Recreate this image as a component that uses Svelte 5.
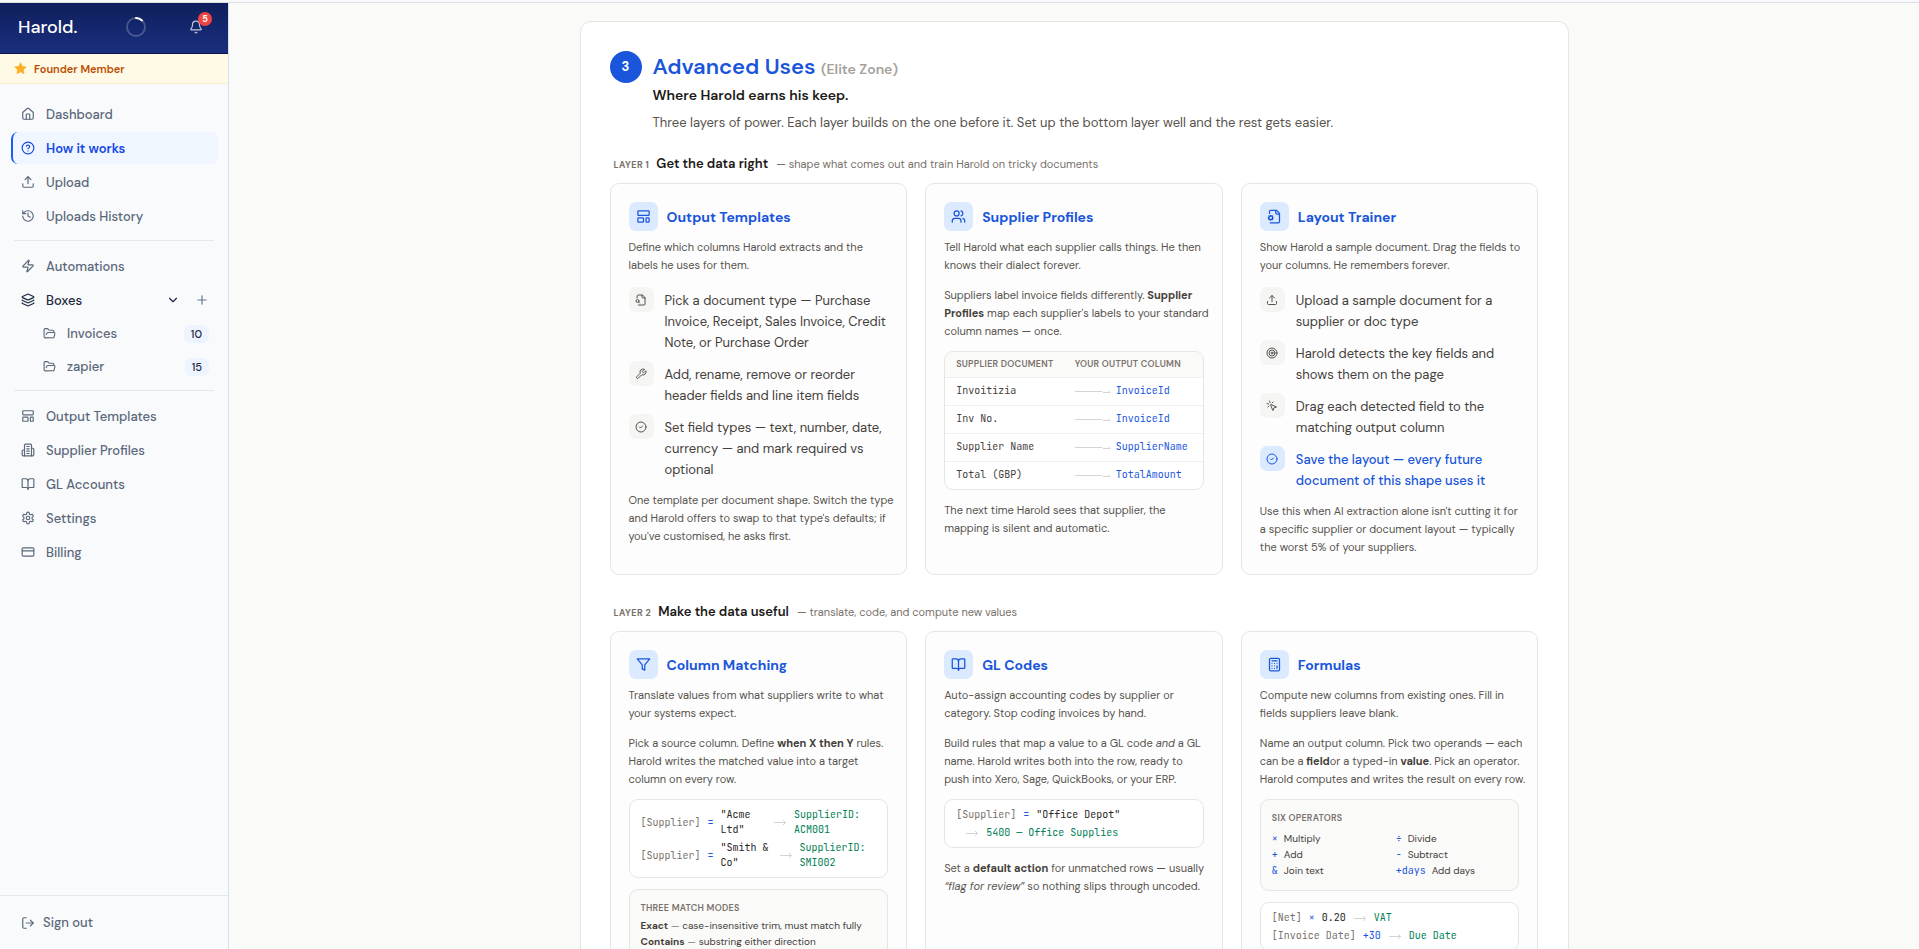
<script lang="ts">
	const icons: Record<string, string> = {
		house: '<path d="M15 21v-8a1 1 0 0 0-1-1h-4a1 1 0 0 0-1 1v8"/><path d="M3 10a2 2 0 0 1 .709-1.528l7-5.999a2 2 0 0 1 2.582 0l7 5.999A2 2 0 0 1 21 10v9a2 2 0 0 1-2 2H5a2 2 0 0 1-2-2z"/>',
		help: '<circle cx="12" cy="12" r="10"/><path d="M9.09 9a3 3 0 0 1 5.83 1c0 2-3 3-3 3"/><path d="M12 17h.01"/>',
		upload: '<path d="M21 15v4a2 2 0 0 1-2 2H5a2 2 0 0 1-2-2v-4"/><path d="m17 8-5-5-5 5"/><path d="M12 3v12"/>',
		history: '<path d="M3 12a9 9 0 1 0 9-9 9.75 9.75 0 0 0-6.74 2.74L3 8"/><path d="M3 3v5h5"/><path d="M12 7v5l4 2"/>',
		zap: '<path d="M4 14a1 1 0 0 1-.78-1.63l9.9-10.2a.5.5 0 0 1 .86.46l-1.92 6.02A1 1 0 0 0 13 10h7a1 1 0 0 1 .78 1.63l-9.9 10.2a.5.5 0 0 1-.86-.46l1.92-6.02A1 1 0 0 0 11 14z"/>',
		layers: '<path d="M12.83 2.18a2 2 0 0 0-1.66 0L2.6 6.08a1 1 0 0 0 0 1.83l8.58 3.91a2 2 0 0 0 1.66 0l8.58-3.9a1 1 0 0 0 0-1.83z"/><path d="M2 12a1 1 0 0 0 .58.91l8.6 3.91a2 2 0 0 0 1.65 0l8.58-3.9A1 1 0 0 0 22 12"/><path d="M2 17a1 1 0 0 0 .58.91l8.6 3.91a2 2 0 0 0 1.65 0l8.58-3.9A1 1 0 0 0 22 17"/>',
		folder: '<path d="m6 14 1.5-2.9A2 2 0 0 1 9.24 10H20a2 2 0 0 1 1.94 2.5l-1.54 6a2 2 0 0 1-1.95 1.5H4a2 2 0 0 1-2-2V5a2 2 0 0 1 2-2h3.9a2 2 0 0 1 1.69.9l.81 1.2a2 2 0 0 0 1.67.9H18a2 2 0 0 1 2 2v2"/>',
		template: '<rect width="18" height="7" x="3" y="3" rx="1"/><rect width="9" height="7" x="3" y="14" rx="1"/><rect width="5" height="7" x="16" y="14" rx="1"/>',
		building: '<path d="M6 22V4a2 2 0 0 1 2-2h8a2 2 0 0 1 2 2v18Z"/><path d="M6 12H4a2 2 0 0 0-2 2v6a2 2 0 0 0 2 2h2"/><path d="M18 9h2a2 2 0 0 1 2 2v9a2 2 0 0 1-2 2h-2"/><path d="M10 6h4"/><path d="M10 10h4"/><path d="M10 14h4"/><path d="M10 18h4"/>',
		book: '<path d="M12 7v14"/><path d="M3 18a1 1 0 0 1-1-1V4a1 1 0 0 1 1-1h5a4 4 0 0 1 4 4 4 4 0 0 1 4-4h5a1 1 0 0 1 1 1v13a1 1 0 0 1-1 1h-6a3 3 0 0 0-3 3 3 3 0 0 0-3-3z"/>',
		settings: '<path d="M12.22 2h-.44a2 2 0 0 0-2 2v.18a2 2 0 0 1-1 1.73l-.43.25a2 2 0 0 1-2 0l-.15-.08a2 2 0 0 0-2.73.73l-.22.38a2 2 0 0 0 .73 2.73l.15.1a2 2 0 0 1 1 1.72v.51a2 2 0 0 1-1 1.74l-.15.09a2 2 0 0 0-.73 2.73l.22.38a2 2 0 0 0 2.73.73l.15-.08a2 2 0 0 1 2 0l.43.25a2 2 0 0 1 1 1.73V20a2 2 0 0 0 2 2h.44a2 2 0 0 0 2-2v-.18a2 2 0 0 1 1-1.73l.43-.25a2 2 0 0 1 2 0l.15.08a2 2 0 0 0 2.73-.73l.22-.39a2 2 0 0 0-.73-2.73l-.15-.08a2 2 0 0 1-1-1.74v-.5a2 2 0 0 1 1-1.74l.15-.09a2 2 0 0 0 .73-2.73l-.22-.38a2 2 0 0 0-2.73-.73l-.15.08a2 2 0 0 1-2 0l-.43-.25a2 2 0 0 1-1-1.73V4a2 2 0 0 0-2-2z"/><circle cx="12" cy="12" r="3"/>',
		card: '<rect width="20" height="14" x="2" y="5" rx="2"/><path d="M2 10h20"/>',
		logout: '<path d="M9 21H5a2 2 0 0 1-2-2V5a2 2 0 0 1 2-2h4"/><path d="m16 17 5-5-5-5"/><path d="M21 12H9"/>',
		bell: '<path d="M10.268 21a2 2 0 0 0 3.464 0"/><path d="M3.262 15.326A1 1 0 0 0 4 17h16a1 1 0 0 0 .74-1.673C19.41 13.956 18 12.499 18 8A6 6 0 0 0 6 8c0 4.499-1.411 5.956-2.738 7.326"/>',
		chevron: '<path d="m6 9 6 6 6-6"/>',
		plus: '<path d="M5 12h14"/><path d="M12 5v14"/>',
		users: '<path d="M16 21v-2a4 4 0 0 0-4-4H6a4 4 0 0 0-4 4v2"/><circle cx="9" cy="7" r="4"/><path d="M22 21v-2a4 4 0 0 0-3-3.87"/><path d="M16 3.13a4 4 0 0 1 0 7.75"/>',
		fileCog: '<path d="M14 2v4a2 2 0 0 0 2 2h4"/><path d="M4 7V4a2 2 0 0 1 2-2h9l5 5v13a2 2 0 0 1-2 2H5"/><circle cx="6" cy="14" r="3"/><path d="M6 10v1M6 17v1M10 14H9M3 14H2m6.8-2.8-.7.7m-4.2 4.2-.7.7m0-5.6.7.7m4.2 4.2.7.7"/>',
		fileSearch: '<path d="M14 2v4a2 2 0 0 0 2 2h4"/><path d="M4.27 8V4a2 2 0 0 1 2-2H15l5 5v13a2 2 0 0 1-2 2H7"/><circle cx="5" cy="14" r="3"/><path d="m9 18-1.9-1.9"/>',
		wrench: '<path d="M14.7 6.3a1 1 0 0 0 0 1.4l1.6 1.6a1 1 0 0 0 1.4 0l3.77-3.77a6 6 0 0 1-7.94 7.94l-6.91 6.91a2.12 2.12 0 0 1-3-3l6.91-6.91a6 6 0 0 1 7.94-7.94z"/>',
		check: '<circle cx="12" cy="12" r="10"/><path d="m9 12 2 2 4-4"/>',
		target: '<circle cx="12" cy="12" r="10"/><circle cx="12" cy="12" r="6"/><circle cx="12" cy="12" r="2"/>',
		click: '<path d="M14 4.1 12 6"/><path d="m5.1 8-2.9-.8"/><path d="m6 12-1.9 2"/><path d="M7.2 2.2 8 5.1"/><path d="M9.037 9.69a.498.498 0 0 1 .653-.653l11 4.5a.5.5 0 0 1-.074.949l-4.349 1.041a1 1 0 0 0-.74.739l-1.04 4.35a.5.5 0 0 1-.95.074z"/>',
		filter: '<path d="M22 3H2l8 9.46V19l4 2v-8.54z"/>',
		calculator: '<rect width="16" height="20" x="4" y="2" rx="2"/><path d="M8 6h8"/><path d="M16 14v4"/><path d="M16 10h.01M12 10h.01M8 10h.01M12 14h.01M8 14h.01M12 18h.01M8 18h.01"/>'
	};

	const mainNav = [
		{ icon: 'house', label: 'Dashboard' },
		{ icon: 'help', label: 'How it works', active: true },
		{ icon: 'upload', label: 'Upload' },
		{ icon: 'history', label: 'Uploads History' }
	];

	const boxes = [
		{ label: 'Invoices', count: 10 },
		{ label: 'zapier', count: 15 }
	];

	const setupNav = [
		{ icon: 'template', label: 'Output Templates' },
		{ icon: 'building', label: 'Supplier Profiles' },
		{ icon: 'book', label: 'GL Accounts' },
		{ icon: 'settings', label: 'Settings' },
		{ icon: 'card', label: 'Billing' }
	];

	const mappings = [
		['Invoitizia', 'InvoiceId'],
		['Inv No.', 'InvoiceId'],
		['Supplier Name', 'SupplierName'],
		['Total (GBP)', 'TotalAmount']
	];

	const matchRules = [
		['"Acme Ltd"', 'SupplierID: ACM001'],
		['"Smith & Co"', 'SupplierID: SMI002']
	];

	const operators = [
		['×', 'Multiply'],
		['÷', 'Divide'],
		['+', 'Add'],
		['-', 'Subtract'],
		['&', 'Join text'],
		['+days', 'Add days']
	];

	let boxesOpen = $state(true);
</script>

{#snippet icon(name: string, size = 14)}
	<svg class="icon" width={size} height={size} viewBox="0 0 24 24" aria-hidden="true">
		{@html icons[name]}
	</svg>
{/snippet}

{#snippet arrow()}
	<svg class="arrow" width="14" height="8" viewBox="0 0 14 8" aria-hidden="true">
		<path d="M1 4.500h12M10 2l2.500 2.500L10 7" />
	</svg>
{/snippet}

{#snippet longArrow()}
	<svg class="arrow" width="36" height="8" viewBox="0 0 36 8" aria-hidden="true">
		<path d="M0 4.500h27M28 5.500h7l-2-2" />
	</svg>
{/snippet}

{#snippet heading(name: string, title: string)}
	<div class="card-head">
		<span class="card-icon">{@render icon(name, 15)}</span>
		<h3>{title}</h3>
	</div>
{/snippet}

<div class="app">
	<div class="topline"></div>
	<div class="shell">
		<aside class="sidebar">
			<header class="brand">
				<span class="logo">Harold.</span>
				<svg class="spinner" width="22" height="22" viewBox="0 0 22 22" aria-hidden="true">
					<circle cx="11" cy="11" r="9" />
					<path d="M11 2a9 9 0 0 1 6 2.400" />
				</svg>
				<button class="bell" aria-label="Notifications">
					{@render icon('bell')}
					<span class="bell-count">5</span>
				</button>
			</header>

			<div class="founder">
				<svg width="13" height="13" viewBox="0 0 24 24" aria-hidden="true">
					<path d="M12 1.500l3.200 6.700 7.300 1-5.300 5.100 1.300 7.300L12 18.100l-6.500 3.500 1.300-7.300L1.500 9.200l7.300-1z" />
				</svg>
				Founder Member
			</div>

			<nav class="nav">
				{#each mainNav as item}
					<a href="#top" class="nav-item" class:active={item.active}>
						{@render icon(item.icon)}
						{item.label}
					</a>
				{/each}
				<hr />
				<a href="#top" class="nav-item">{@render icon('zap')} Automations</a>
				<div class="nav-item boxes">
					{@render icon('layers')}
					<a href="#top">Boxes</a>
					<button aria-label="Toggle boxes" onclick={() => (boxesOpen = !boxesOpen)}>
						{@render icon('chevron')}
					</button>
					<button class="add" aria-label="Add box">{@render icon('plus')}</button>
				</div>
				{#if boxesOpen}
					{#each boxes as box}
						<a href="#top" class="nav-item sub">
							{@render icon('folder', 13)}
							{box.label}
							<span class="count">{box.count}</span>
						</a>
					{/each}
				{/if}
				<hr />
				{#each setupNav as item}
					<a href="#top" class="nav-item">
						{@render icon(item.icon)}
						{item.label}
					</a>
				{/each}
			</nav>

			<div class="signout">
				<button>{@render icon('logout')} Sign out</button>
			</div>
		</aside>

		<main class="content">
			<section class="panel">
				<div class="intro">
					<span class="step">3</span>
					<div>
						<h1>Advanced Uses <span>(Elite Zone)</span></h1>
						<p class="tagline">Where Harold earns his keep.</p>
						<p class="lead">
							Three layers of power. Each layer builds on the one before it. Set up the bottom layer well and the rest gets easier.
						</p>
					</div>
				</div>

				<div class="layer">
					<span class="layer-no">LAYER 1</span>
					<h2>Get the data right</h2>
					<span class="layer-sub">— shape what comes out and train Harold on tricky documents</span>
				</div>

				<div class="cards">
					<article class="card">
						{@render heading('template', 'Output Templates')}
						<p>Define which columns Harold extracts and the labels he uses for them.</p>
						<ul class="steps">
							<li>
								<span class="tile">{@render icon('fileSearch', 12)}</span>
								<span>Pick a document type — Purchase Invoice, Receipt, Sales Invoice, Credit Note, or Purchase Order</span>
							</li>
							<li>
								<span class="tile">{@render icon('wrench', 12)}</span>
								<span>Add, rename, remove or reorder header fields and line item fields</span>
							</li>
							<li>
								<span class="tile">{@render icon('check', 12)}</span>
								<span>Set field types — text, number, date, currency — and mark required vs optional</span>
							</li>
						</ul>
						<p>
							One template per document shape. Switch the type and Harold offers to swap to that type's defaults;
							if you've customised, he asks first.
						</p>
					</article>

					<article class="card">
						{@render heading('users', 'Supplier Profiles')}
						<p>Tell Harold what each supplier calls things. He then knows their dialect forever.</p>
						<p class="detail">
							Suppliers label invoice fields differently. <strong>Supplier Profiles</strong> map each supplier's
							labels to your standard column names — once.
						</p>
						<div class="mapping">
							<table>
								<thead>
									<tr>
										<th>Supplier document</th>
										<th>Your output column</th>
									</tr>
								</thead>
								<tbody>
									{#each mappings as [from, to]}
										<tr>
											<td>{from}</td>
											<td><span class="target">{@render longArrow()}{to}</span></td>
										</tr>
									{/each}
								</tbody>
							</table>
						</div>
						<p>The next time Harold sees that supplier, the mapping is silent and automatic.</p>
					</article>

					<article class="card">
						{@render heading('fileCog', 'Layout Trainer')}
						<p>Show Harold a sample document. Drag the fields to your columns. He remembers forever.</p>
						<ul class="steps">
							<li>
								<span class="tile">{@render icon('upload', 12)}</span>
								<span>Upload a sample document for a supplier or doc type</span>
							</li>
							<li>
								<span class="tile">{@render icon('target', 12)}</span>
								<span>Harold detects the key fields and shows them on the page</span>
							</li>
							<li>
								<span class="tile">{@render icon('click', 12)}</span>
								<span>Drag each detected field to the matching output column</span>
							</li>
							<li class="final">
								<span class="tile">{@render icon('check', 12)}</span>
								<span>Save the layout — every future document of this shape uses it</span>
							</li>
						</ul>
						<p>
							Use this when AI extraction alone isn't cutting it for a specific supplier or document layout —
							typically the worst 5% of your suppliers.
						</p>
					</article>
				</div>

				<div class="layer">
					<span class="layer-no">LAYER 2</span>
					<h2>Make the data useful</h2>
					<span class="layer-sub">— translate, code, and compute new values</span>
				</div>

				<div class="cards">
					<article class="card">
						{@render heading('filter', 'Column Matching')}
						<p>Translate values from what suppliers write to what your systems expect.</p>
						<p class="detail">
							Pick a source column. Define <strong>when X then Y</strong> rules. Harold writes the matched value
							into a target column on every row.
						</p>
						<div class="code">
							{#each matchRules as [value, result]}
								<div class="line">
									<span class="field">[Supplier]</span>
									<span class="op">=</span>
									<span class="value">{value}</span>
									{@render arrow()}
									<span class="result">{result}</span>
								</div>
							{/each}
						</div>
						<div class="box">
							<h4>Three match modes</h4>
							<p><strong>Exact</strong> <i>—</i> case-insensitive trim, must match fully</p>
							<p><strong>Contains</strong> <i>—</i> substring either direction</p>
						</div>
					</article>

					<article class="card">
						{@render heading('book', 'GL Codes')}
						<p>Auto-assign accounting codes by supplier or category. Stop coding invoices by hand.</p>
						<p class="detail">
							Build rules that map a value to a GL code <em>and</em> a GL name. Harold writes both into the row,
							ready to push into Xero, Sage, QuickBooks, or your ERP.
						</p>
						<div class="code">
							<div class="line">
								<span class="field">[Supplier]</span>
								<span class="op">=</span>
								<span class="value">"Office Depot"</span>
							</div>
							<div class="line indent">
								{@render arrow()}
								<span class="result">5400 — Office Supplies</span>
							</div>
						</div>
						<p>
							Set a <strong>default action</strong> for unmatched rows — usually
							<em>“flag for review”</em> so nothing slips through uncoded.
						</p>
					</article>

					<article class="card">
						{@render heading('calculator', 'Formulas')}
						<p>Compute new columns from existing ones. Fill in fields suppliers leave blank.</p>
						<p class="detail">
							Name an output column. Pick two operands — each can be a <strong>field</strong>or a typed-in
							<strong>value</strong>. Pick an operator. Harold computes and writes the result on every row.
						</p>
						<div class="box">
							<h4>Six operators</h4>
							<div class="operators">
								{#each operators as [sign, name]}
									<span><b>{sign}</b>{name}</span>
								{/each}
							</div>
						</div>
						<div class="code">
							<div class="line">
								<span class="field">[Net]</span>
								<span class="op">×</span>
								<span class="value">0.20</span>
								{@render arrow()}
								<span class="result">VAT</span>
							</div>
							<div class="line">
								<span class="field">[Invoice Date]</span>
								<span class="op">+30</span>
								{@render arrow()}
								<span class="result">Due Date</span>
							</div>
						</div>
					</article>
				</div>
			</section>
		</main>
	</div>
</div>

<style>
	:global(body) {
		background: #fafaf8;
	}

	.app {
		display: flex;
		flex-direction: column;
		height: 100vh;
		overflow: hidden;
		font-family: 'DM Sans', Inter, sans-serif;
		color: #44403c;
	}

	.app :global(*) {
		box-sizing: border-box;
	}

	h1, h2, h3, h4, p, ul {
		margin: 0;
		padding: 0;
	}

	button {
		padding: 0;
		border: none;
		background: none;
		color: inherit;
		font: inherit;
		cursor: pointer;
	}

	a {
		color: inherit;
		text-decoration: none;
	}

	.icon {
		display: block;
		flex: none;
		fill: none;
		stroke: currentColor;
		stroke-width: 2;
		stroke-linecap: round;
		stroke-linejoin: round;
	}

	.topline {
		flex: none;
		height: 3px;
		background: #f8f9fb;
		border-bottom: 1px solid #dddde0;
	}

	.shell {
		flex: 1;
		display: flex;
		min-height: 0;
	}

	/* Sidebar */

	.sidebar {
		flex: none;
		display: flex;
		flex-direction: column;
		width: 229px;
		background: #f8fafc;
		border-right: 1px solid #d5e0f0;
	}

	.brand {
		display: flex;
		align-items: center;
		justify-content: space-between;
		height: 51px;
		padding: 0 24px 2px 18px;
		background: linear-gradient(180deg, #0f1f5c, #1a2e7e);
		border-bottom: 1px solid #0b1748;
		color: #fff;
	}

	.logo {
		font-size: 18px;
		font-weight: 500;
	}

	.spinner {
		margin-left: 6px;
		fill: none;
		stroke-width: 2;
	}

	.spinner circle {
		stroke: rgba(255, 255, 255, 0.22);
	}

	.spinner path {
		stroke: #fff;
		stroke-linecap: round;
	}

	.bell {
		position: relative;
		padding-right: 1px;
		color: rgba(255, 255, 255, 0.75);
	}

	.bell-count {
		position: absolute;
		top: -8px;
		right: -8px;
		width: 14px;
		height: 14px;
		border-radius: 50%;
		background: #ef4444;
		color: #fff;
		font-size: 9px;
		font-weight: 700;
		line-height: 14px;
		text-align: center;
	}

	.founder {
		display: flex;
		align-items: center;
		gap: 7px;
		height: 30px;
		padding: 0 14px;
		background: #fffae6;
		border-bottom: 1px solid #fbeecb;
		color: #bb4d00;
		font-size: 11px;
		font-weight: 600;
	}

	.founder svg {
		fill: #fdb022;
		stroke: #f59e0b;
		stroke-width: 1;
	}

	.nav {
		flex: 1;
		display: flex;
		flex-direction: column;
		gap: 2px;
		padding: 14px 10px 14px 11px;
	}

	.nav hr {
		width: 200px;
		margin: 6px 3px 7px;
		border: none;
		border-top: 1px solid #e5e7eb;
	}

	.nav-item {
		display: flex;
		align-items: center;
		gap: 11px;
		height: 32px;
		padding: 0 9px 0 8px;
		border-left: 2px solid transparent;
		border-radius: 7px;
		color: #5b6779;
		font-size: 13px;
		font-weight: 500;
	}

	.nav-item.active {
		background: #eff6ff;
		border-left-color: #155dfc;
		color: #1447e6;
		font-weight: 600;
	}

	.nav-item.boxes {
		color: #1d293d;
	}

	.boxes a {
		flex: 1;
	}

	.boxes .add {
		margin-left: 4px;
		color: #62748e;
	}

	.nav-item.sub {
		height: 31px;
		padding-left: 30px;
	}

	.count {
		margin-left: auto;
		padding: 0 7px;
		border-radius: 7px;
		background: #edf3ff;
		color: #1d293d;
		font-size: 11px;
		line-height: 18px;
	}

	.signout {
		padding: 18px 21px;
		border-top: 1px solid #e2e8f0;
		color: #5b6779;
		font-size: 13px;
		font-weight: 500;
		line-height: 17px;
	}

	.signout button {
		display: flex;
		align-items: center;
		gap: 8px;
	}

	/* Content */

	.content {
		flex: 1;
		padding: 18px 24px;
		overflow-y: auto;
		scrollbar-width: none;
	}

	.panel {
		max-width: 989px;
		margin: 0 auto;
		padding: 29px;
		background: #fff;
		border: 1px solid #e7e5e4;
		border-radius: 11px;
	}

	.intro {
		display: flex;
		gap: 11px;
		margin-bottom: 17px;
	}

	.step {
		flex: none;
		width: 32px;
		height: 32px;
		border-radius: 50%;
		background: #1a56db;
		color: #fff;
		font-size: 13px;
		font-weight: 700;
		line-height: 32px;
		text-align: center;
	}

	h1 {
		color: #1a56db;
		font-size: 22px;
		font-weight: 600;
		line-height: 31px;
	}

	h1 span {
		color: #a6a09b;
		font-size: 14px;
		font-weight: 600;
	}

	.tagline {
		color: #1c1917;
		font-size: 14px;
		font-weight: 600;
		line-height: 20px;
	}

	.lead {
		margin-top: 5px;
		color: #57534d;
		font-size: 13px;
		line-height: 26px;
	}

	.layer {
		display: flex;
		align-items: baseline;
		padding: 0 4px;
		margin-bottom: 7px;
		line-height: 21px;
	}

	.layer-no {
		margin-right: 7px;
		color: #79716b;
		font-size: 9px;
		font-weight: 700;
		letter-spacing: 0.05em;
	}

	h2 {
		margin-right: 8px;
		color: #1c1917;
		font-size: 13px;
		font-weight: 600;
	}

	.layer-sub {
		color: #79716b;
		font-size: 11px;
	}

	.cards {
		display: grid;
		grid-template-columns: repeat(3, minmax(0, 1fr));
		gap: 18px;
		margin-bottom: 26px;
	}

	.card {
		padding: 18px;
		background: #fdfdfd;
		border: 1px solid #e7e5e4;
		border-radius: 9px;
		color: #57534d;
		font-size: 11px;
		line-height: 18px;
	}

	/* let the copy run slightly wider than the boxes below it */
	.card > p {
		margin-right: -6px;
	}

	.card-head {
		display: flex;
		align-items: center;
		gap: 9px;
		margin-bottom: 7px;
	}

	.card-icon {
		display: grid;
		place-items: center;
		width: 29px;
		height: 29px;
		border-radius: 7px;
		background: #dbeafe;
		color: #1a56db;
	}

	h3 {
		color: #1a56db;
		font-size: 14px;
		font-weight: 700;
	}

	.card strong {
		color: #44403b;
		font-weight: 700;
	}

	.card .detail {
		margin-top: 12px;
	}

	.steps {
		display: flex;
		flex-direction: column;
		gap: 8px;
		margin: 13px 0 11px;
		list-style: none;
	}

	.steps li {
		display: flex;
		gap: 11px;
		color: #44403b;
		font-size: 13px;
		line-height: 21px;
	}

	.steps li > span:last-child {
		padding-top: 3px;
	}

	.tile {
		flex: none;
		display: grid;
		place-items: center;
		width: 25px;
		height: 25px;
		border-radius: 7px;
		background: #f5f5f4;
		color: #57534d;
	}

	.steps .final {
		color: #1a56db;
		font-weight: 500;
	}

	.final .tile {
		background: #dbeafe;
		color: #1a56db;
	}

	.mapping {
		margin: 11px 0;
		border: 1px solid #e7e5e4;
		border-radius: 9px;
		background: #fff;
		overflow: hidden;
	}

	table {
		width: 100%;
		border-collapse: collapse;
	}

	th, td {
		padding: 0 0 0 11px;
		text-align: left;
	}

	th {
		height: 25px;
		background: #fafaf9;
		color: #79716b;
		font-size: 9px;
		font-weight: 600;
		letter-spacing: 0.025em;
		line-height: 12px;
		text-transform: uppercase;
	}

	th:first-child {
		width: 46%;
	}

	td {
		height: 28px;
		border-top: 1px solid #f0efee;
		color: #44403b;
		font-family: 'JetBrains Mono', 'DejaVu Sans Mono', monospace;
		font-size: 10px;
	}

	.target {
		display: flex;
		align-items: center;
		gap: 5px;
		color: #1a56db;
	}

	.arrow {
		flex: none;
		fill: none;
		stroke: #d6d3d1;
		stroke-width: 1;
	}

	.code {
		margin: 11px 0;
		padding: 7px 11px;
		border: 1px solid #e7e5e4;
		border-radius: 9px;
		background: #fff;
		font-family: 'JetBrains Mono', 'DejaVu Sans Mono', monospace;
		font-size: 10px;
	}

	.line {
		display: flex;
		align-items: center;
		gap: 7px;
		line-height: 15px;
	}

	.line + .line {
		margin-top: 3px;
	}

	.indent {
		padding-left: 9px;
	}

	.field {
		color: #79716b;
	}

	.op {
		color: #1a56db;
	}

	.value {
		color: #292524;
	}

	.result {
		color: #008055;
	}

	.box {
		margin: 11px 0;
		padding: 11px;
		border: 1px solid #e7e5e4;
		border-radius: 9px;
		background: #fafaf9;
		color: #44403b;
		font-size: 10px;
		line-height: 16px;
	}

	h4 {
		margin-bottom: 3px;
		color: #79716b;
		font-size: 9px;
		font-weight: 600;
		letter-spacing: 0.025em;
		line-height: 14px;
		text-transform: uppercase;
	}

	.box i {
		color: #79716b;
		font-style: normal;
	}

	.operators {
		display: grid;
		grid-template-columns: 1fr 1fr;
		column-gap: 12px;
		margin-top: 6px;
	}

	.operators b {
		margin-right: 6px;
		color: #1a56db;
		font-family: 'JetBrains Mono', 'DejaVu Sans Mono', monospace;
		font-weight: 400;
	}
</style>
